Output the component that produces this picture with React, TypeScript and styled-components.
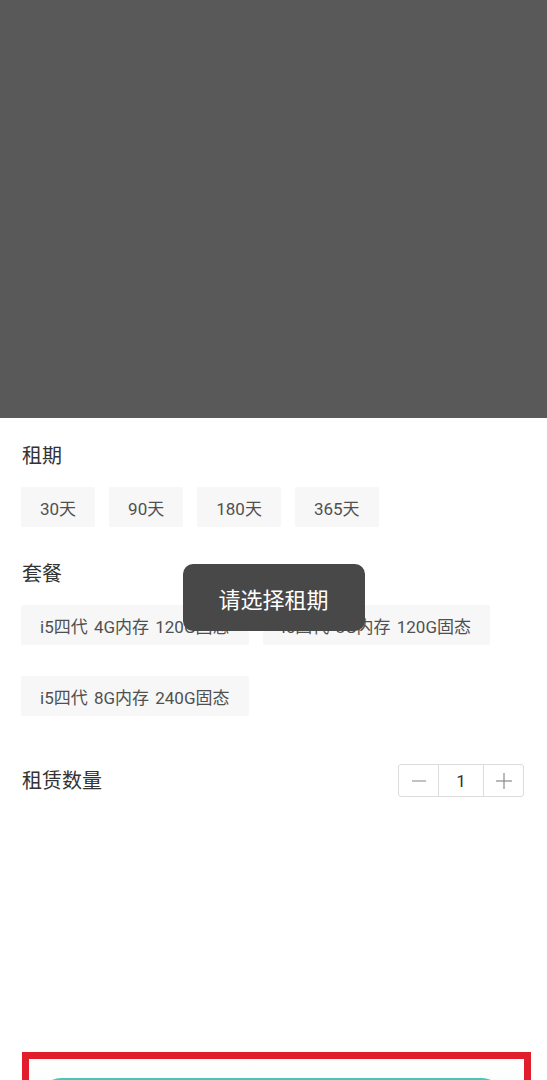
import React from 'react';
import styled, { createGlobalStyle } from 'styled-components';

const GlobalStyle = createGlobalStyle`
  html, body {
    margin: 0;
    padding: 0;
    background: #ffffff;
  }
  body {
    font-family: Roboto, "Noto Sans CJK SC", sans-serif;
  }
`;

const Page = styled.div`
  display: flex;
  flex-direction: column;
  height: 100vh;
  overflow: hidden;
  position: relative;
`;

const Mask = styled.div`
  height: 418px;
  flex-shrink: 0;
  background-color: #595959;
`;

const Sheet = styled.div`
  flex: 1;
  display: flex;
  flex-direction: column;
  background-color: #ffffff;
  padding: 26px 22px 0 21px;
`;

const Section = styled.div<{ gapTop: number }>`
  margin-top: ${({ gapTop }) => gapTop}px;
`;

const Title = styled.h3`
  margin: 0 0 0 1px;
  font-size: 20px;
  line-height: 24px;
  font-weight: 400;
  color: #333;
`;

const Options = styled.div<{ rowGap: number }>`
  display: flex;
  flex-wrap: wrap;
  column-gap: 14px;
  row-gap: ${({ rowGap }) => rowGap}px;
  margin-top: 19px;
`;

const Chip = styled.div`
  height: 40px;
  padding: 0 19px;
  display: flex;
  align-items: center;
  background-color: #f7f7f7;
  border-radius: 2px;
  font-size: 17px;
  word-spacing: 2px;
  color: #505050;
  white-space: nowrap;
`;

const CountRow = styled.div`
  display: flex;
  align-items: center;
  justify-content: space-between;
  margin-top: 48px;
`;

const CountLabel = styled(Title)`
  font-size: 20px;
`;

const Stepper = styled.div`
  display: flex;
  height: 33px;
  border: 1px solid #dcdcdc;
  border-radius: 3px;
  box-sizing: border-box;
  margin-right: 1px;
`;

const StepButton = styled.div`
  width: 39px;
  display: flex;
  align-items: center;
  justify-content: center;
`;

const StepValue = styled.div`
  width: 44px;
  display: flex;
  align-items: center;
  justify-content: center;
  border-left: 1px solid #dcdcdc;
  border-right: 1px solid #dcdcdc;
  font-size: 17px;
  color: #333;
`;

const Footer = styled.div`
  margin-top: auto;
  margin-bottom: -52px;
  margin-left: 1px;
  margin-right: -6px;
  height: 80px;
  flex-shrink: 0;
  border: 7px solid #e21d2c;
  border-bottom: none;
  box-sizing: border-box;
  padding: 19px 20px 0 10px;
  background: linear-gradient(#ffffff, #f2fbfa);
`;

const SubmitButton = styled.div`
  height: 44px;
  border-radius: 22px;
  background-color: #4cc6b3;
`;

const Toast = styled.div`
  position: absolute;
  top: 564px;
  left: 50%;
  transform: translateX(-50%);
  height: 67px;
  padding: 0 36px;
  display: flex;
  align-items: center;
  border-radius: 10px;
  background-color: #484848;
  color: #ffffff;
  font-size: 22px;
  white-space: nowrap;
`;

const PERIODS = ['30天', '90天', '180天', '365天'];

const PACKAGES = [
  'i5四代 4G内存 120G固态',
  'i5四代 8G内存 120G固态',
  'i5四代 8G内存 240G固态',
];

const Minus = () => (
  <svg width="16" height="16" viewBox="0 0 16 16">
    <line x1="1" y1="8" x2="15" y2="8" stroke="#9a9a9a" strokeWidth="1.2" />
  </svg>
);

const Plus = () => (
  <svg width="18" height="18" viewBox="0 0 18 18">
    <line x1="1" y1="9" x2="17" y2="9" stroke="#8a8a8a" strokeWidth="1.2" />
    <line x1="9" y1="1" x2="9" y2="17" stroke="#8a8a8a" strokeWidth="1.2" />
  </svg>
);

export const App = () => {
  return (
    <>
      <GlobalStyle />
      <Page>
        <Mask />
        <Sheet>
          <Section gapTop={0}>
            <Title>租期</Title>
            <Options rowGap={14}>
              {PERIODS.map((period) => (
                <Chip key={period}>{period}</Chip>
              ))}
            </Options>
          </Section>
          <Section gapTop={35}>
            <Title>套餐</Title>
            <Options rowGap={31}>
              {PACKAGES.map((pkg) => (
                <Chip key={pkg}>{pkg}</Chip>
              ))}
            </Options>
          </Section>
          <CountRow>
            <CountLabel>租赁数量</CountLabel>
            <Stepper>
              <StepButton>
                <Minus />
              </StepButton>
              <StepValue>1</StepValue>
              <StepButton>
                <Plus />
              </StepButton>
            </Stepper>
          </CountRow>
          <Footer>
            <SubmitButton />
          </Footer>
        </Sheet>
        <Toast>请选择租期</Toast>
      </Page>
    </>
  );
};

export default App;
